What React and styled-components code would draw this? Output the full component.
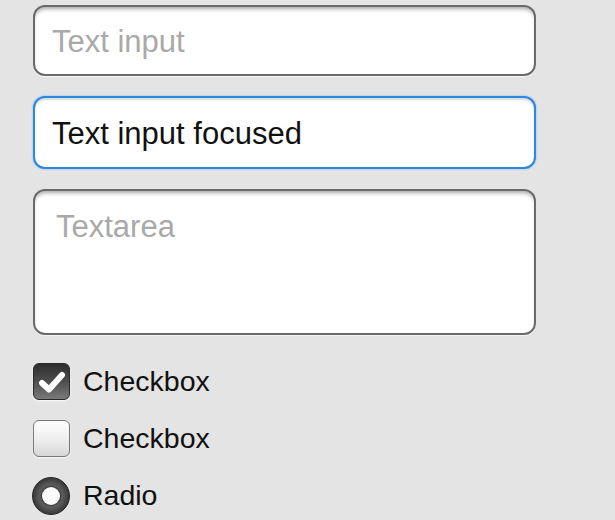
import React from "react";
import styled, { createGlobalStyle, css } from "styled-components";

const GlobalStyle = createGlobalStyle`
  html, body {
    margin: 0;
    padding: 0;
    background: #e4e4e4;
    font-family: "Liberation Sans", Arial, sans-serif;
  }
`;

const Form = styled.div`
  display: flex;
  flex-direction: column;
  padding: 5px 0 0 33px;
  width: 503px;
`;

const fieldBase = css`
  box-sizing: border-box;
  width: 100%;
  border: 2px solid #6a6a6a;
  border-radius: 12px;
  background: #fff;
  font-family: "Liberation Sans", Arial, sans-serif;
  font-size: 31px;
  color: #111;
  padding: 3px 17px 0;
  outline: none;
  box-shadow: inset 0 4px 4px -2px rgba(0, 0, 0, 0.35),
    0 1px 1px rgba(255, 255, 255, 0.7);
  &::placeholder {
    color: #a9a9a9;
  }
`;

const Input = styled.input`
  ${fieldBase}
  height: 71px;
  margin-bottom: 20px;
  ${(p) =>
    p.$focused &&
    css`
      height: 73px;
      border: 2.5px solid #2a8ae2;
      box-shadow: inset 0 2px 2px rgba(0, 0, 0, 0.15),
        0 0 2px rgba(42, 138, 226, 0.6);
    `}
`;

const TextArea = styled.textarea`
  ${fieldBase}
  height: 146px;
  resize: none;
  padding-top: 18px;
  padding-left: 21px;
  line-height: 36px;
  margin-bottom: 28px;
`;

const Option = styled.label`
  display: flex;
  align-items: center;
  gap: 13px;
  height: 37px;
  margin-bottom: 20px;
  font-size: 28.5px;
  color: #111;
`;

const Box = styled.span`
  box-sizing: border-box;
  width: 37px;
  height: 37px;
  border-radius: 6px;
  display: flex;
  align-items: center;
  justify-content: center;
  ${(p) =>
    p.$checked
      ? css`
          border: 1.5px solid #2a2a2a;
          background: linear-gradient(#2e2e2e, #4a4a4a 45%, #7a7a7a);
          box-shadow: 0 1px 2px rgba(255, 255, 255, 0.9);
        `
      : css`
          border: 1.5px solid #777;
          background: linear-gradient(#ffffff, #ebebeb 60%, #d6d6d6);
          box-shadow: inset 0 1px 1px rgba(255, 255, 255, 0.9),
            0 1px 2px rgba(255, 255, 255, 0.8);
        `}
`;

const Round = styled.span`
  box-sizing: border-box;
  width: 38px;
  height: 38px;
  margin-left: -1px;
  border-radius: 50%;
  border: 1px solid #222;
  background: radial-gradient(circle at 50% 50%, #9a9a9a 0%, #6a6a6a 35%, #3a3a3a 70%, #1e1e1e 100%);
  display: flex;
  align-items: center;
  justify-content: center;
  &::after {
    content: "";
    width: 18px;
    height: 18px;
    border-radius: 50%;
    background: #fbfbfb;
    box-shadow: 0 0 2px 1px rgba(0, 0, 0, 0.55);
  }
`;

const Check = () => (
  <svg width="28" height="24" viewBox="0 0 28 24">
    <path
      d="M4 13 L11 19.5 L24 5"
      fill="none"
      stroke="#fff"
      strokeWidth="6"
      strokeLinecap="round"
      strokeLinejoin="round"
    />
  </svg>
);

export default function App() {
  return (
    <>
      <GlobalStyle />
      <Form>
        <Input placeholder="Text input" />
        <Input $focused defaultValue="Text input focused" />
        <TextArea placeholder="Textarea" />
        <Option>
          <Box $checked>
            <Check />
          </Box>
          Checkbox
        </Option>
        <Option>
          <Box />
          Checkbox
        </Option>
        <Option>
          <Round />
          Radio
        </Option>
      </Form>
    </>
  );
}
